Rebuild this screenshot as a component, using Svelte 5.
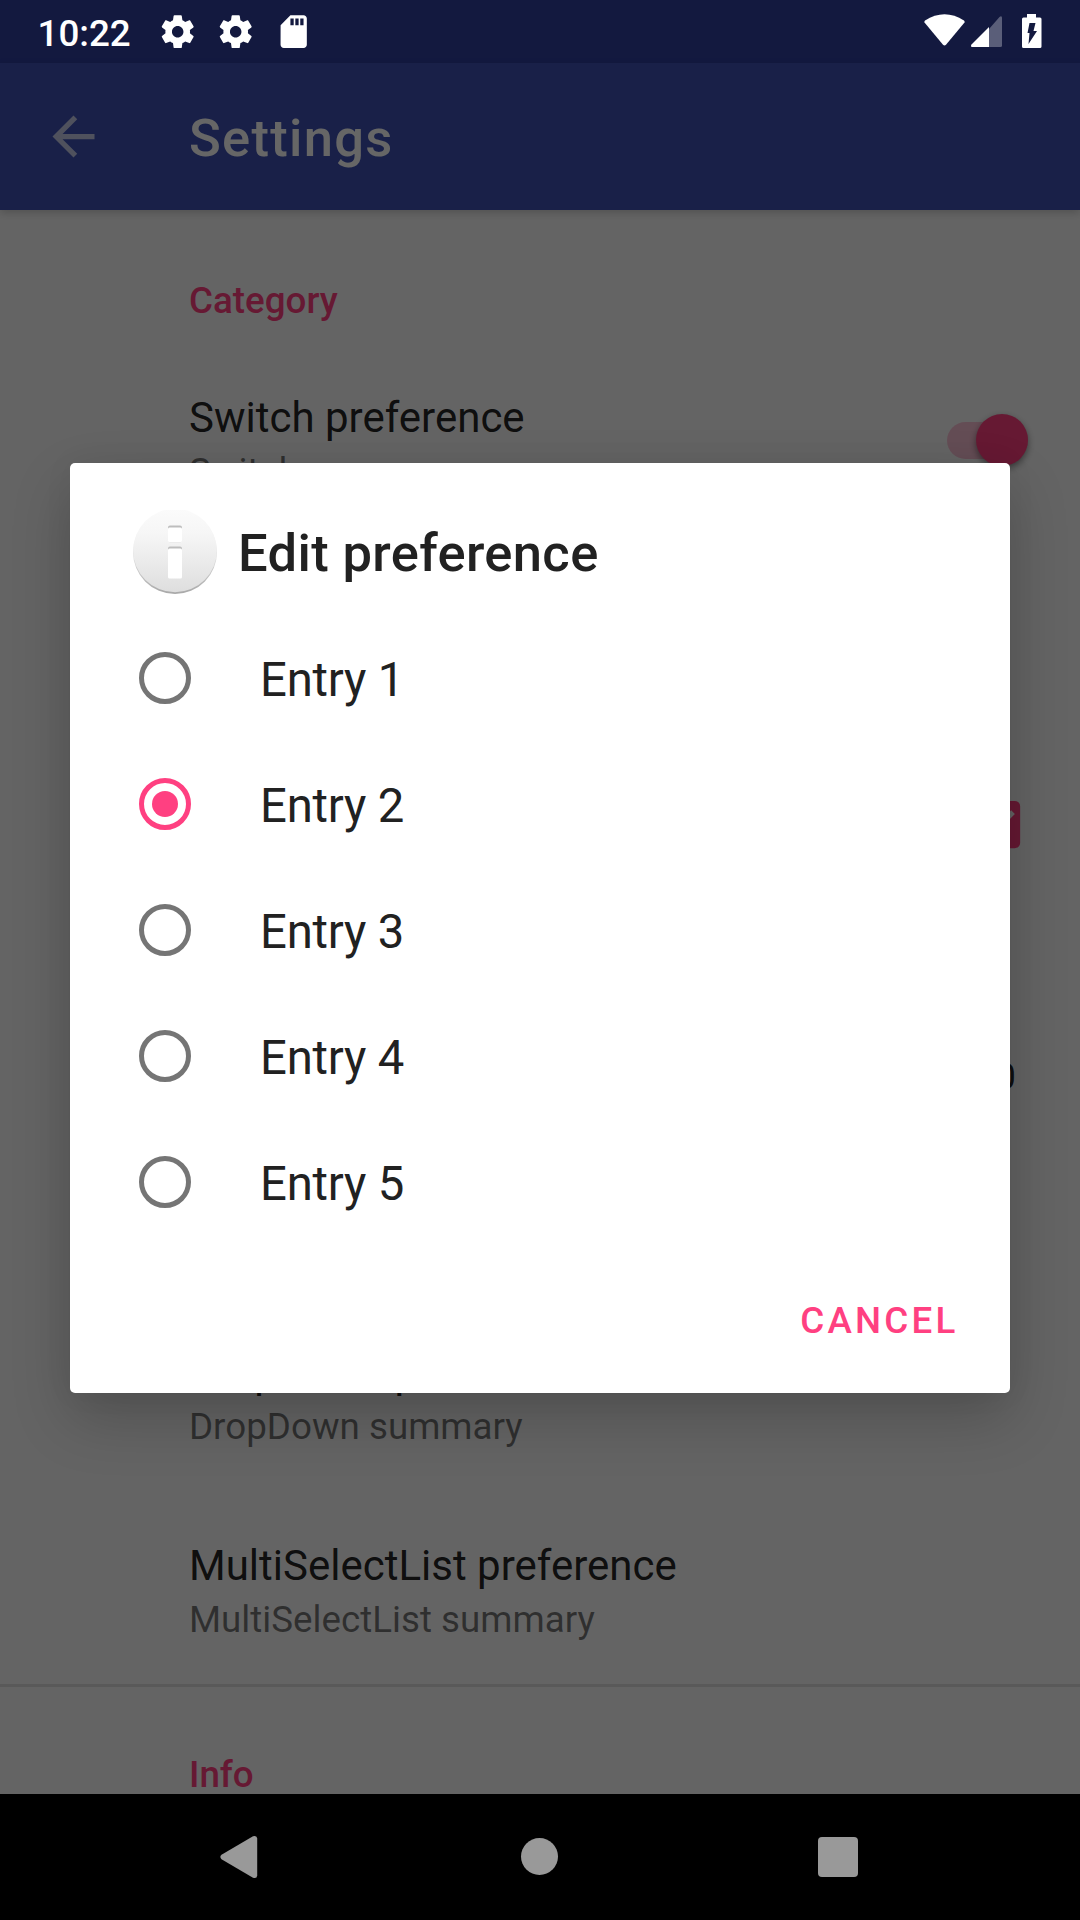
<script>
  const entries = ['Entry 1', 'Entry 2', 'Entry 3', 'Entry 4', 'Entry 5'];
  let selected = $state(1);
</script>

{#snippet gear()}
  <svg class="status-icon" viewBox="0 0 24 24">
    <path d="M19.43 12.98c.04-.32.07-.64.07-.98s-.03-.66-.07-.98l2.11-1.65c.19-.15.24-.42.12-.64l-2-3.46c-.12-.22-.39-.3-.61-.22l-2.49 1c-.52-.4-1.08-.73-1.69-.98l-.38-2.65C14.46 2.18 14.25 2 14 2h-4c-.25 0-.46.18-.49.42l-.38 2.65c-.61.25-1.17.59-1.69.98l-2.49-1c-.23-.09-.49 0-.61.22l-2 3.46c-.13.22-.07.49.12.64l2.11 1.65c-.04.32-.07.65-.07.98s.03.66.07.98l-2.11 1.65c-.19.15-.24.42-.12.64l2 3.46c.12.22.39.3.61.22l2.49-1c.52.4 1.08.73 1.69.98l.38 2.65c.03.24.24.42.49.42h4c.25 0 .46-.18.49-.42l.38-2.65c.61-.25 1.17-.59 1.69-.98l2.49 1c.23.09.49 0 .61-.22l2-3.46c.12-.22.07-.49-.12-.64l-2.11-1.65zM12 15.5c-1.93 0-3.5-1.57-3.5-3.5s1.57-3.5 3.5-3.5 3.5 1.57 3.5 3.5-1.57 3.5-3.5 3.5z" />
  </svg>
{/snippet}

<div class="phone">
  <div class="status-back"></div>
  <header class="toolbar">
    <svg class="back" viewBox="0 0 24 24"><path d="M20 11H7.83l5.59-5.59L12 4l-8 8 8 8 1.41-1.41L7.83 13H20v-2z" /></svg>
    <h1>Settings</h1>
  </header>

  <main class="prefs">
    <h2 class="category">Category</h2>
    <section class="pref">
      <div class="labels">
        <div class="title">Switch preference</div>
        <div class="summary">Switch summary</div>
      </div>
      <div class="switch"><span class="knob"></span></div>
    </section>
    <section class="pref"></section>
    <section class="pref">
      <svg class="checkbox" viewBox="0 0 24 24"><path d="M19 3H5c-1.11 0-2 .9-2 2v14c0 1.1.89 2 2 2h14c1.11 0 2-.9 2-2V5c0-1.1-.89-2-2-2zm-9 14l-5-5 1.41-1.41L10 14.17l7.59-7.59L19 8l-9 9z" /></svg>
    </section>
    <section class="pref seek"><span class="value">0</span></section>
    <section class="pref">
      <div class="labels">
        <div class="title">DropDown preference</div>
        <div class="summary">DropDown summary</div>
      </div>
    </section>
    <section class="pref">
      <div class="labels">
        <div class="title">MultiSelectList preference</div>
        <div class="summary">MultiSelectList summary</div>
      </div>
    </section>
    <h2 class="category info">Info</h2>
  </main>

  <div class="scrim">
    <div class="status">
      <span class="time">10:22</span>
      {@render gear()}
      {@render gear()}
      <svg class="status-icon" viewBox="0 0 24 24"><path d="M18 2h-8L4.02 8 4 20c0 1.1.9 2 2 2h12c1.1 0 2-.9 2-2V4c0-1.1-.9-2-2-2zm-6 6h-2V4h2v4zm3 0h-2V4h2v4zm3 0h-2V4h2v4z" /></svg>
      <svg class="signals" width="120" height="63" viewBox="0 0 120 63">
        <path d="M.5 22.5Q0 21.3 1 20.5Q20.5 8 40 20.5Q41 21.3 40.5 22.5L22 44.8Q20.5 46.3 19 44.8Z" />
        <path opacity=".3" d="M65 29V47H76.5Q78 47 78 45.5V17.5Q77.5 15.5 75.5 17Z" />
        <path d="M65 27V47H48Q46.2 46.5 47.5 44.5Z" />
        <path fill-rule="evenodd" d="M103 14h9v3.5h4q1.5 0 1.5 1.5v27.500q0 1.5-1.5 1.5H99.500q-1.5 0-1.5-1.5V19q0-1.5 1.5-1.5H103ZM105.500 23L103.500 33H105.500L104.500 44L113 31H109.500L111.500 23Z" />
      </svg>
    </div>

    <div class="dialog" role="dialog" aria-label="Edit preference">
      <div class="heading">
        <svg width="84" height="84" viewBox="0 0 84 84">
          <defs>
            <linearGradient id="disc" x1="0" y1="0" x2="0" y2="1">
              <stop offset="0" stop-color="#fbfbfb" />
              <stop offset=".3" stop-color="#f6f6f6" />
              <stop offset="1" stop-color="#dedede" />
            </linearGradient>
            <linearGradient id="rim" x1="0" y1="0" x2="0" y2="1">
              <stop offset=".4" stop-color="#eeeeee" />
              <stop offset="1" stop-color="#a8a8a8" />
            </linearGradient>
          </defs>
          <circle cx="42" cy="42" r="42" fill="url(#rim)" />
          <circle cx="42" cy="40.5" r="41.8" fill="url(#disc)" />
          <rect x="35" y="15.5" width="14" height="17" rx="2" fill="#bdbdbd" />
          <rect x="35" y="17.5" width="14" height="15" rx="1.5" fill="#fff" />
          <rect x="35" y="36.5" width="14" height="30" rx="2" fill="#bdbdbd" />
          <rect x="35" y="38.5" width="14" height="30" rx="1.5" fill="#fff" />
        </svg>
        <h3>Edit preference</h3>
      </div>
      <div class="entries">
        {#each entries as entry, i}
          <button class="entry" class:selected={selected === i} onclick={() => (selected = i)}>
            <span class="radio"></span><span>{entry}</span>
          </button>
        {/each}
      </div>
      <div class="actions"><button class="cancel">CANCEL</button></div>
    </div>
  </div>

  <nav class="navbar">
    <svg width="38" height="44" viewBox="0 0 38 44"><path d="M1.5 19.8L33 1.2Q37 0 37.2 3.5V40.5Q37 44 33 42.8L1.5 24.2Q-.8 22 1.5 19.8Z" /></svg>
    <span class="home"></span>
    <span class="recents"></span>
  </nav>
</div>

<style>
  :global(body) { margin: 0; }
  .phone {
    position: relative;
    display: flex;
    flex-direction: column;
    width: 1080px;
    height: 1920px;
    overflow: hidden;
    background: #fafafa;
    font-family: Roboto, sans-serif;
  }
  h1, h2, h3 { margin: 0; font-weight: 500; }
  button { border: 0; padding: 0; background: none; font-family: inherit; text-align: left; }
  .status-back { flex: none; height: 63px; background: #303f9f; }
  .toolbar {
    z-index: 1;
    flex: none;
    display: flex;
    align-items: center;
    gap: 84px;
    box-sizing: border-box;
    height: 147px;
    padding-left: 42px;
    background: #3f51b5;
    color: #fff;
    box-shadow: 0 3px 8px rgba(0, 0, 0, 0.18);
  }
  .back { width: 63px; height: 63px; fill: rgba(255, 255, 255, 0.7); }
  h1 { font-size: 52.5px; line-height: 62px; padding-top: 3px; letter-spacing: 1.3px; }
  .prefs { flex: 1; min-height: 0; overflow: hidden; color: rgba(0, 0, 0, 0.87); }
  .category {
    box-sizing: border-box;
    height: 134px;
    padding: 69px 0 0 189px;
    font-size: 36.75px;
    line-height: 44px;
    color: #ff4081;
  }
  .pref {
    box-sizing: border-box;
    display: flex;
    align-items: center;
    justify-content: space-between;
    height: 192.4px;
    padding: 0 52px 0 189px;
  }
  .seek { height: 378px; padding-right: 64px; }
  .seek .value { margin-left: auto; padding-bottom: 67px; font-size: 36.75px; line-height: 44px; }
  .labels { padding-top: 8px; }
  .title { font-size: 42px; line-height: 50px; }
  .summary { font-size: 36.75px; line-height: 46px; padding-top: 6px; color: rgba(0, 0, 0, 0.54); }
  .checkbox { width: 63px; height: 63px; margin-left: auto; fill: #ff4081; }
  .switch {
    display: flex;
    align-items: center;
    justify-content: flex-end;
    width: 81px;
    height: 37px;
    border-radius: 19px;
    background: rgba(255, 64, 129, 0.3);
  }
  .knob { width: 52px; height: 52px; border-radius: 50%; background: #ff4081; box-shadow: 0 3px 7px rgba(0, 0, 0, 0.45); }
  .info { border-top: 3px solid #dfdfdf; height: 110px; padding-top: 70px; line-height: 36px; }
  .scrim {
    position: absolute;
    z-index: 2;
    inset: 0;
    display: flex;
    flex-direction: column;
    align-items: center;
    background: rgba(0, 0, 0, 0.6);
  }
  .status {
    flex: none;
    display: flex;
    align-items: center;
    box-sizing: border-box;
    width: 1080px;
    height: 63px;
    padding-left: 37.5px;
    color: #fff;
    fill: #fff;
  }
  .time { width: 120.8px; padding-top: 4px; font-size: 36.75px; font-weight: 500; line-height: 44px; }
  .status-icon { width: 39.4px; height: 39.4px; margin-right: 18.6px; }
  .signals { margin-left: 592px; flex: none; }
  .dialog {
    box-sizing: border-box;
    width: 940px;
    height: 930px;
    margin-top: 400px;
    padding-top: 47px;
    border-radius: 5px;
    background: #fff;
    color: #212121;
    box-shadow: 0 25px 60px rgba(0, 0, 0, 0.2), 0 0 30px rgba(0, 0, 0, 0.05);
  }
  .heading { display: flex; align-items: center; gap: 21px; height: 84px; padding-left: 63px; }
  h3 { font-size: 52.5px; line-height: 62px; padding-top: 2px; letter-spacing: 0.35px; }
  .entries { margin-top: 21px; }
  .entry {
    display: flex;
    align-items: center;
    gap: 69px;
    width: 100%;
    height: 126px;
    padding-left: 69px;
    color: #212121;
    font-size: 47.25px;
    line-height: 56px;
    letter-spacing: -0.2px;
  }
  .entry span + span { padding-top: 4px; }
  .radio {
    display: grid;
    place-items: center;
    box-sizing: border-box;
    width: 52px;
    height: 52px;
    border: 5px solid #757575;
    border-radius: 50%;
  }
  .selected .radio { border-color: #ff4081; }
  .selected .radio::after { content: ''; width: 26px; height: 26px; border-radius: 50%; background: #ff4081; }
  .actions { display: flex; justify-content: flex-end; padding: 54px 51.5px 0 0; }
  .cancel { color: #ff4081; font-size: 36.75px; line-height: 44px; font-weight: 500; letter-spacing: 3.2px; }
  .navbar {
    position: relative;
    z-index: 3;
    flex: none;
    display: flex;
    align-items: center;
    box-sizing: border-box;
    height: 126px;
    padding-left: 220px;
    background: #000;
    fill: #999;
  }
  .home { width: 37px; height: 37px; margin: 0 260px 1px 263px; border-radius: 50%; background: #999; }
  .recents { width: 40px; height: 40px; border-radius: 4px; background: #999; }
</style>
